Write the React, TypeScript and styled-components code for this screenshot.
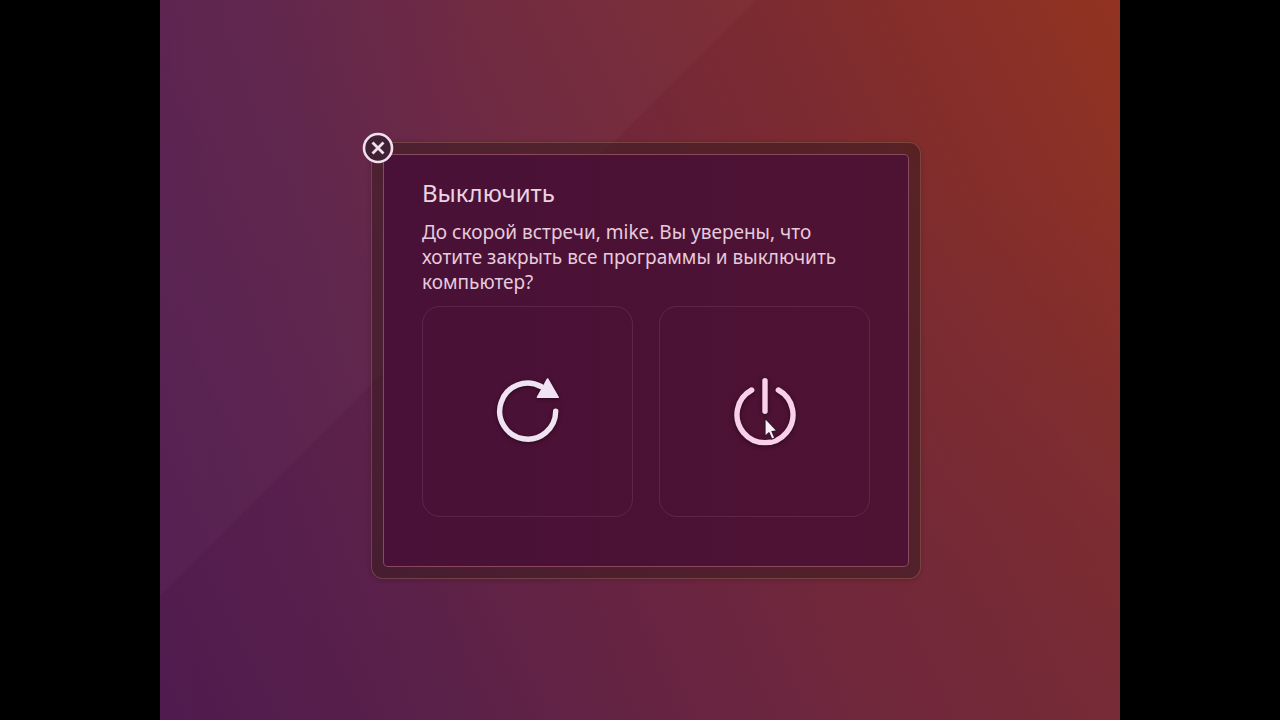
import React from "react";
import styled, { createGlobalStyle } from "styled-components";

const GlobalStyle = createGlobalStyle`
  *, *::before, *::after { box-sizing: border-box; }
  body {
    margin: 0;
    background: #000;
    font-family: "Noto Sans", "Open Sans", sans-serif;
  }
`;

const Screen = styled.div`
  display: flex;
  justify-content: center;
  min-height: 100vh;
  background: #000;
`;

const Desktop = styled.main`
  display: flex;
  align-items: center;
  justify-content: center;
  min-height: 100vh;
  aspect-ratio: 4 / 3;
  padding-left: 12px;
  background:
    linear-gradient(135deg, rgba(255, 255, 255, 0.025) 0 35.4%, transparent 35.5%),
    radial-gradient(circle at 100% 100%, rgba(108, 42, 62, 0.4), transparent 45%),
    linear-gradient(90deg, rgba(82, 30, 86, 0.4), transparent 32%),
    linear-gradient(64deg, #4f1a49 0%, #5b2149 22%, #6b2540 46%, #7a2a32 70%, #923321 100%);
`;

const Dialog = styled.section`
  position: relative;
  width: 550px;
  max-width: 100%;
  padding: 11px;
  border: 1px solid rgba(205, 150, 120, 0.3);
  border-radius: 12px;
  background: rgba(58, 28, 32, 0.58);
  box-shadow: 0 1px 4px rgba(40, 10, 20, 0.25);
`;

const Panel = styled.div`
  padding: 22px 38px 49px;
  border: 1px solid rgba(225, 150, 150, 0.42);
  border-radius: 5px;
  background: linear-gradient(90deg, #491137, #4e1233);
`;

const Title = styled.h1`
  margin: 0;
  font-size: 24px;
  line-height: 32px;
  font-weight: 400;
  color: #ead3e3;
`;

const Message = styled.p`
  margin: 11px 0;
  font-size: 19px;
  line-height: 25px;
  color: #e6cbdc;
`;

const Actions = styled.div`
  display: grid;
  grid-template-columns: 1fr 1fr;
  gap: 26px;
`;

const ActionButton = styled.button`
  display: grid;
  place-items: center;
  aspect-ratio: 1;
  padding: 0;
  border: 1px solid rgba(255, 190, 230, 0.11);
  border-radius: 18px;
  background: transparent;
`;

const ActionIcon = styled.svg<{ $tone: string }>`
  width: 72px;
  height: 72px;
  color: ${({ $tone }) => $tone};
  filter: drop-shadow(0 1px 2px rgba(20, 0, 14, 0.6));
`;

const CloseButton = styled.button`
  position: absolute;
  top: -11px;
  left: -10px;
  width: 32px;
  height: 32px;
  padding: 0;
  border: 0;
  border-radius: 50%;
  background: none;
`;

const Cursor = styled.svg`
  position: absolute;
  top: 272px;
  left: 390px;
  width: 18px;
  height: 28px;
  pointer-events: none;
`;

const RestartIcon = () => (
  <ActionIcon $tone="#efe2f2" viewBox="0 0 72 72" aria-hidden="true">
    <path
      d="M63.7 36.3A28 28 0 1 1 49 11.5"
      fill="none"
      stroke="currentColor"
      strokeWidth="5.4"
      strokeLinecap="round"
    />
    <path
      d="M55.6 4L66.2 22.3H45.4Z"
      fill="currentColor"
      stroke="currentColor"
      strokeWidth="1.6"
      strokeLinejoin="round"
    />
  </ActionIcon>
);

const PowerIcon = () => (
  <ActionIcon $tone="#f8d0e9" viewBox="0 0 72 72" aria-hidden="true">
    <g fill="none" stroke="currentColor" strokeWidth="5.4" strokeLinecap="round">
      <path d="M49.3 15A28 28 0 1 1 22.7 15" />
      <path d="M36 5.6V36.2" />
    </g>
  </ActionIcon>
);

export default function App() {
  return (
    <>
      <GlobalStyle />
      <Screen>
        <Desktop>
          <Dialog role="dialog" aria-labelledby="shutdown-title" aria-describedby="shutdown-message">
            <Panel>
              <Title id="shutdown-title">Выключить</Title>
              <Message id="shutdown-message">
                До скорой встречи, mike. Вы уверены, что хотите закрыть все программы и выключить компьютер?
              </Message>
              <Actions>
                <ActionButton type="button" aria-label="Перезагрузить">
                  <RestartIcon />
                </ActionButton>
                <ActionButton type="button" aria-label="Выключить">
                  <PowerIcon />
                </ActionButton>
              </Actions>
            </Panel>
            <CloseButton type="button" aria-label="Закрыть">
              <svg width="32" height="32" viewBox="0 0 32 32" aria-hidden="true">
                <circle cx="16" cy="16" r="14" fill="#402035" stroke="#f1dfec" strokeWidth="2.6" />
                <path
                  d="M10.5 10.5L21.5 21.5M21.5 10.5L10.5 21.5"
                  stroke="#f1dfec"
                  strokeWidth="2.8"
                />
              </svg>
            </CloseButton>
            <Cursor viewBox="0 0 18 28" aria-hidden="true">
              <path
                d="M3 3V21.5L7 17.8L9.8 24.2L12.8 22.8L10 16.6L15 15.8Z"
                fill="#f8f0f8"
                stroke="#35152b"
                strokeWidth="1.2"
                strokeLinejoin="round"
              />
            </Cursor>
          </Dialog>
        </Desktop>
      </Screen>
    </>
  );
}
